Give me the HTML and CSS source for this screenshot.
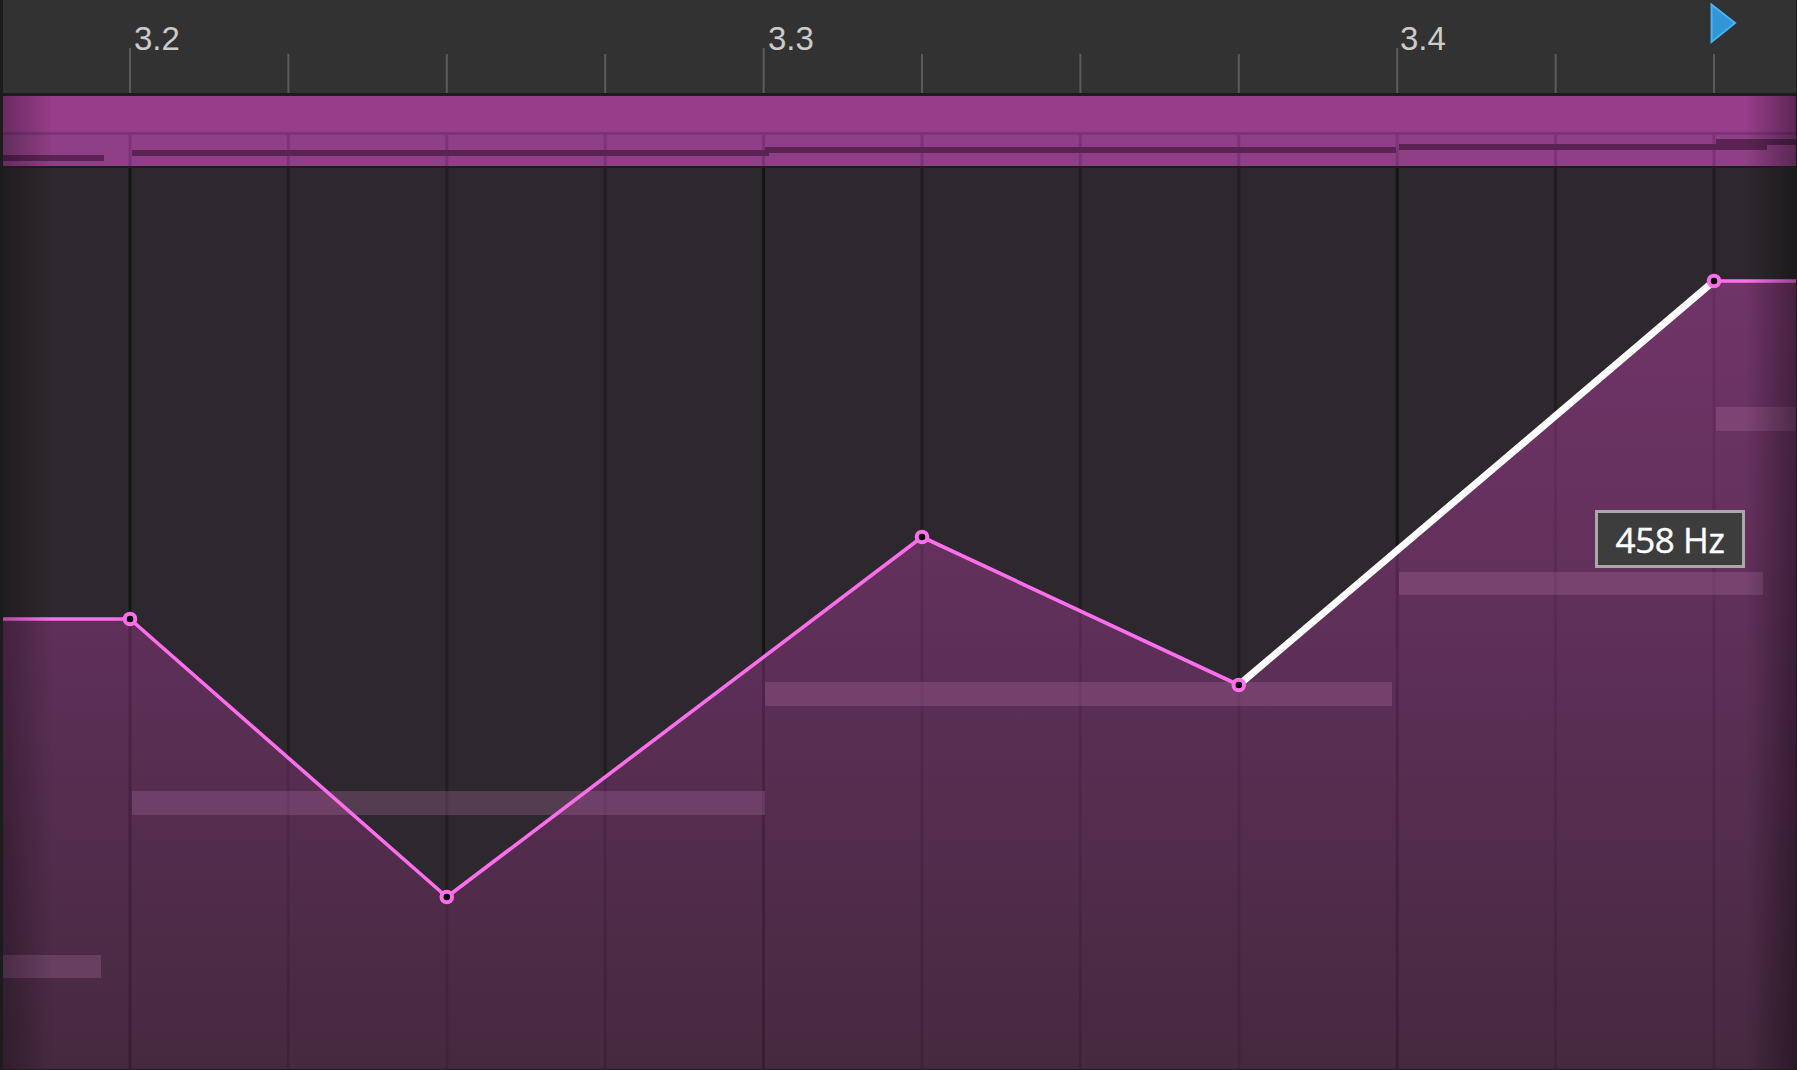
FILE: index.html
```html
<!DOCTYPE html>
<html lang="en">
<head>
<meta charset="utf-8">
<title>Pitch editor</title>
<link rel="stylesheet" href="styles.css">
</head>
<body>
<div class="editor">
  <div class="ruler">
    <svg class="ruler-svg" viewBox="3 0 1793 93" width="1793" height="93">
      <g class="ticks">
        <line x1="130" y1="48" x2="130" y2="93"/>
        <line x1="288.4" y1="54" x2="288.4" y2="93"/>
        <line x1="446.8" y1="54" x2="446.8" y2="93"/>
        <line x1="605.2" y1="54" x2="605.2" y2="93"/>
        <line x1="763.6" y1="48" x2="763.6" y2="93"/>
        <line x1="922" y1="54" x2="922" y2="93"/>
        <line x1="1080.4" y1="54" x2="1080.4" y2="93"/>
        <line x1="1238.8" y1="54" x2="1238.8" y2="93"/>
        <line x1="1397.2" y1="48" x2="1397.2" y2="93"/>
        <line x1="1555.6" y1="54" x2="1555.6" y2="93"/>
        <line x1="1714" y1="54" x2="1714" y2="93"/>
      </g>
      <polygon class="playhead" points="1711.5,4.5 1711.5,42 1735,23"/>
    </svg>
    <span class="tick-label l1">3.2</span>
    <span class="tick-label l2">3.3</span>
    <span class="tick-label l3">3.4</span>
  </div>

  <div class="band">
    <svg class="band-svg" viewBox="3 96 1793 70" width="1793" height="70">
      <rect x="3" y="96" width="1794" height="36" fill="#973d8a"/>
      <rect x="3" y="132" width="1794" height="3" fill="#7c3476"/>
      <rect x="3" y="135" width="1794" height="31" fill="#8f3f85"/>
      <g class="band-grid">
        <line x1="130" y1="132" x2="130" y2="166"/>
        <line x1="288.4" y1="132" x2="288.4" y2="166"/>
        <line x1="446.8" y1="132" x2="446.8" y2="166"/>
        <line x1="605.2" y1="132" x2="605.2" y2="166"/>
        <line x1="763.6" y1="132" x2="763.6" y2="166"/>
        <line x1="922" y1="132" x2="922" y2="166"/>
        <line x1="1080.4" y1="132" x2="1080.4" y2="166"/>
        <line x1="1238.8" y1="132" x2="1238.8" y2="166"/>
        <line x1="1397.2" y1="132" x2="1397.2" y2="166"/>
        <line x1="1555.6" y1="132" x2="1555.6" y2="166"/>
        <line x1="1714" y1="132" x2="1714" y2="166"/>
      </g>
      <g class="band-notes">
        <rect x="3" y="155" width="101" height="6"/>
        <rect x="132" y="150" width="637" height="6"/>
        <rect x="765" y="147" width="631" height="6"/>
        <rect x="1399" y="144" width="368" height="6"/>
        <rect x="1716" y="139" width="81" height="6"/>
      </g>
    </svg>
  </div>

  <div class="main">
    <svg class="main-svg" viewBox="3 168 1793 901" width="1793" height="901">
      <defs>
        <linearGradient id="fillGrad" gradientUnits="userSpaceOnUse" x1="0" y1="281" x2="0" y2="1069">
          <stop offset="0" stop-color="#c243b0"/>
          <stop offset="0.53" stop-color="#933786"/>
          <stop offset="1" stop-color="#642a55"/>
        </linearGradient>
      </defs>
      <rect x="3" y="168" width="1794" height="901" fill="#2d282d"/>
      <g class="grid-minor">
        <line x1="288.4" y1="168" x2="288.4" y2="1069"/>
        <line x1="446.8" y1="168" x2="446.8" y2="1069"/>
        <line x1="605.2" y1="168" x2="605.2" y2="1069"/>
        <line x1="922" y1="168" x2="922" y2="1069"/>
        <line x1="1080.4" y1="168" x2="1080.4" y2="1069"/>
        <line x1="1238.8" y1="168" x2="1238.8" y2="1069"/>
        <line x1="1555.6" y1="168" x2="1555.6" y2="1069"/>
        <line x1="1714" y1="168" x2="1714" y2="1069"/>
      </g>
      <g class="grid-major">
        <line x1="130" y1="168" x2="130" y2="1069"/>
        <line x1="763.6" y1="168" x2="763.6" y2="1069"/>
        <line x1="1397.2" y1="168" x2="1397.2" y2="1069"/>
      </g>
      <polygon class="area" points="3,619 130,619 446.8,897 922,537 1238.8,685 1714,281 1797,281 1797,1069 3,1069"/>
      <g class="notes">
        <rect x="3" y="955" width="98" height="23"/>
        <rect x="132" y="791" width="633" height="24"/>
        <rect x="765" y="682" width="627" height="24"/>
        <rect x="1399" y="572" width="364" height="23"/>
        <rect x="1716" y="407" width="81" height="24"/>
      </g>
      <polyline class="curve" points="3,619 130,619 446.8,897 922,537 1238.8,685"/>
      <polyline class="curve" points="1714,281 1797,281"/>
      <line class="curve-active" x1="1238.8" y1="685" x2="1714" y2="281"/>
      <g class="points">
        <circle cx="130" cy="619" r="5.3"/>
        <circle cx="446.8" cy="897" r="5.3"/>
        <circle cx="922" cy="537" r="5.3"/>
        <circle cx="1238.8" cy="685" r="5.3"/>
        <circle cx="1714" cy="281" r="5.3"/>
      </g>
    </svg>
    <div class="tooltip">458 Hz</div>
  </div>
</div>
</body>
</html>
```

FILE: styles.css
```css
* {
  box-sizing: border-box;
}

html,
body {
  margin: 0;
  padding: 0;
  background: #1c1c1c;
}

body {
  width: 1797px;
  height: 1070px;
  overflow: hidden;
}

.editor {
  width: 1797px;
  height: 1070px;
  display: flex;
  flex-direction: column;
  background: #1c1c1c;
  border-left: 3px solid #1c1c1c;
  border-right: 1px solid #1c1c1c;
  border-bottom: 1px solid #1c1c1c;
  font-family: "Liberation Sans", Arial, sans-serif;
}

/* ruler */
.ruler {
  position: relative;
  flex: none;
  height: 93px;
  background: #323232;
}

.ruler-svg {
  display: block;
}

.ticks line {
  stroke: #5b5b5b;
  stroke-width: 2;
}

.playhead {
  fill: #3195d6;
  stroke: #45b4f5;
  stroke-width: 2;
  stroke-linejoin: miter;
}

.tick-label {
  position: absolute;
  top: 22px;
  font-size: 33px;
  line-height: 33px;
  color: #cbcbcb;
}

.l1 { left: 131px; }
.l2 { left: 765px; }
.l3 { left: 1397px; }

/* overview band */
.band {
  position: relative;
  flex: none;
  height: 75px;
  border-top: 3px solid #1c1c1c;
  border-bottom: 2px solid #1e1a1e;
}

.band-svg {
  display: block;
}

.band-grid line {
  stroke: #7c3476;
  stroke-width: 3;
}

.band-notes rect {
  fill: #5b2353;
}

.band::after,
.main::after {
  content: "";
  position: absolute;
  inset: 0;
  pointer-events: none;
  background: linear-gradient(to right,
    rgba(0, 0, 0, 0.3) 0,
    rgba(0, 0, 0, 0) 50px,
    rgba(0, 0, 0, 0) calc(100% - 50px),
    rgba(0, 0, 0, 0.38) 100%);
  z-index: 1;
}

/* main pitch area */
.main {
  position: relative;
  flex: none;
  height: 901px;
}

.main-svg {
  display: block;
}

.grid-minor line {
  stroke: #201c20;
  stroke-width: 3;
}

.grid-major line {
  stroke: #141414;
  stroke-width: 3;
}

.area {
  fill: url(#fillGrad);
  fill-opacity: 0.45;
}

.notes rect {
  fill: rgb(160, 100, 150);
  fill-opacity: 0.35;
}

.curve {
  fill: none;
  stroke: #ff6fec;
  stroke-width: 3.6;
  stroke-linejoin: round;
}

.curve-active {
  stroke: #ffffff;
  stroke-width: 7;
}

.points circle {
  fill: #000000;
  stroke: #ff6fec;
  stroke-width: 4;
}

.tooltip {
  position: absolute;
  left: 1592px;
  top: 342px;
  width: 150px;
  height: 58px;
  z-index: 2;
  display: flex;
  align-items: center;
  justify-content: center;
  background: #3d3d3d;
  border: 3px solid #a9a9a9;
  color: #ffffff;
  font-family: "Open Sans", "Noto Sans", sans-serif;
  font-size: 35px;
  letter-spacing: -0.4px;
  line-height: 1;
  -webkit-text-stroke: 0.4px #ffffff;
}
```
